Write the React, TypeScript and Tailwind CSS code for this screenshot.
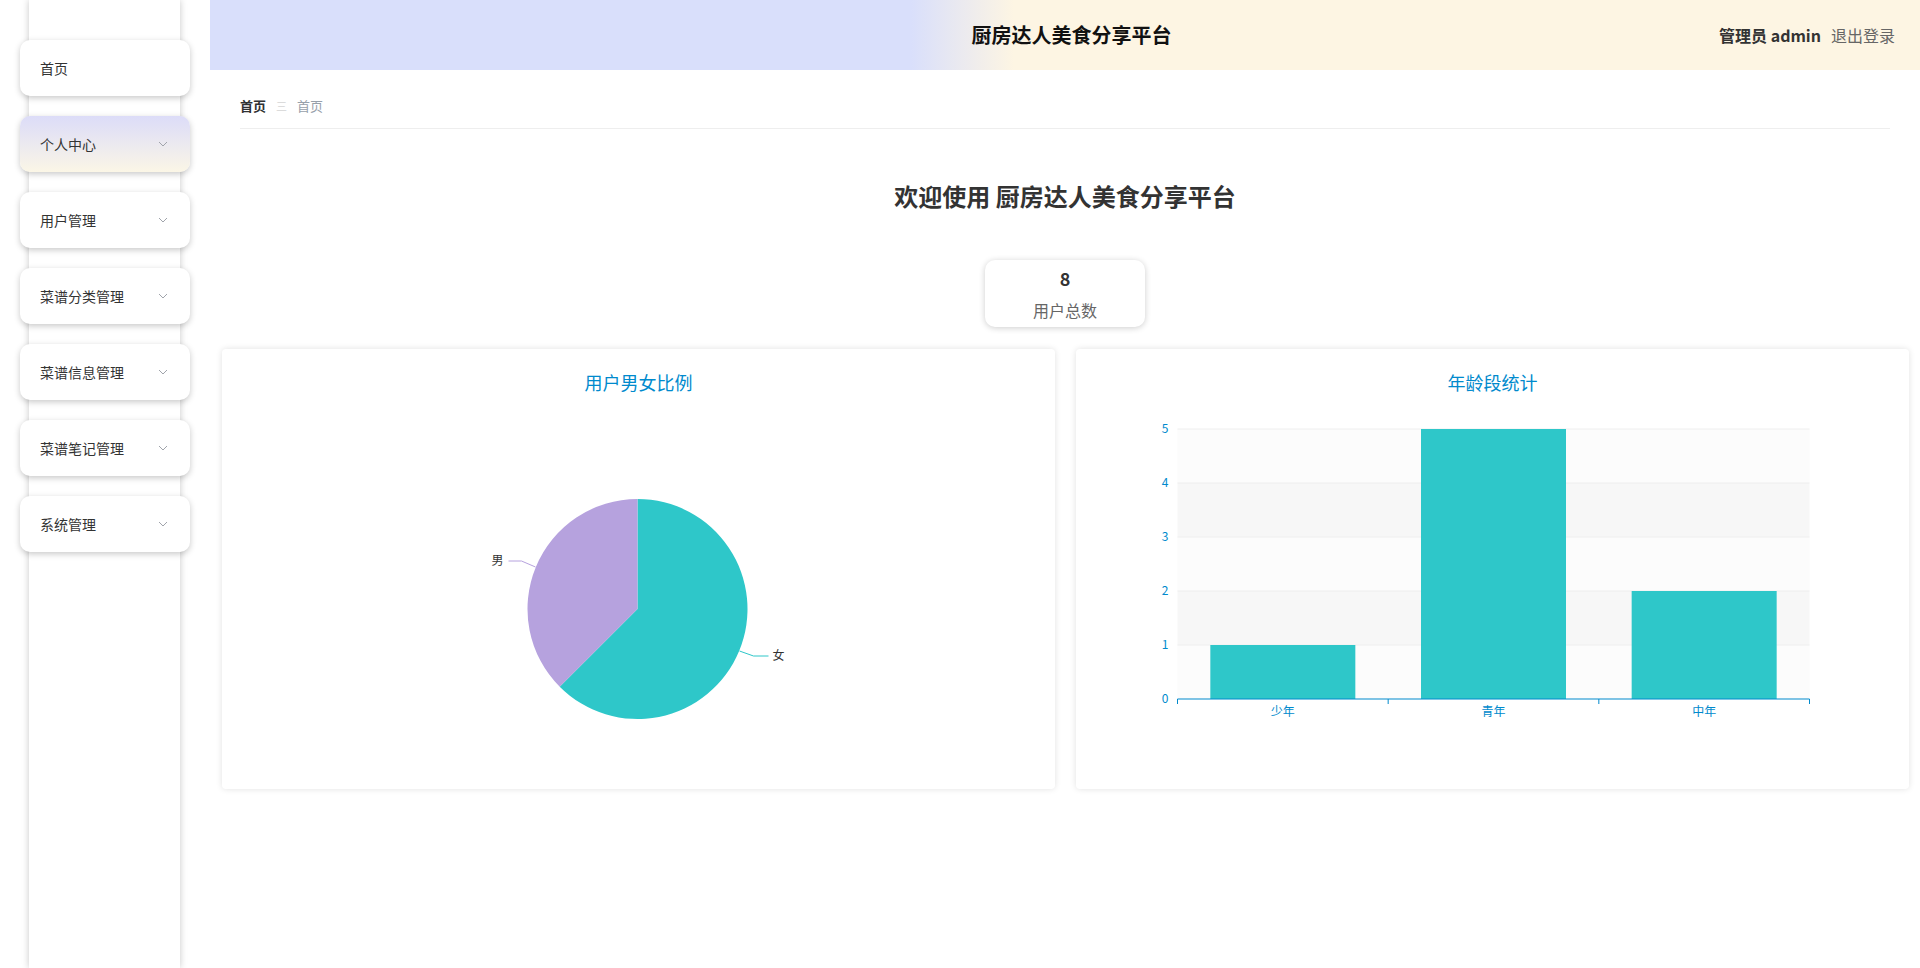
import React from "react";

const menus = [
  { name: "首页", sub: false },
  { name: "个人中心", sub: true, active: true },
  { name: "用户管理", sub: true },
  { name: "菜谱分类管理", sub: true },
  { name: "菜谱信息管理", sub: true },
  { name: "菜谱笔记管理", sub: true },
  { name: "系统管理", sub: true },
];

const font = "font-['Noto_Sans_CJK_SC','Noto_Sans',sans-serif]";

function Chevron() {
  return (
    <svg width="10" height="6" viewBox="0 0 10 6" className="mr-[22px]">
      <polyline
        points="1,1 5,5 9,1"
        fill="none"
        stroke="#a0a4ab"
        strokeWidth="1"
      />
    </svg>
  );
}

function Sidebar() {
  return (
    <aside className="h-full w-[210px] shrink-0 pl-[29px]">
      <div className="flex h-full w-[151px] flex-col gap-5 bg-white pt-10 shadow-[0_0_7px_rgba(0,0,0,0.22)]">
        {menus.map((m) => (
          <div
            key={m.name}
            className={
              "-ml-[9px] flex h-14 w-[170px] items-center justify-between rounded-[10px] pl-5 text-[14px] text-[#333] shadow-[0_2px_6px_rgba(0,0,0,0.22)] " +
              (m.active
                ? "bg-gradient-to-b from-[#dcdcf8] to-[#fbf6e6]"
                : "bg-white")
            }
          >
            <span>{m.name}</span>
            {m.sub && <Chevron />}
          </div>
        ))}
      </div>
    </aside>
  );
}

function Header() {
  return (
    <header className="grid h-[70px] shrink-0 grid-cols-[1fr_auto_1fr] items-center bg-[linear-gradient(90deg,#d9dffb_0%,#d9dffb_41%,#fdf5e3_47%,#fdf5e3_100%)] pr-[25px]">
      <div />
      <div className="pl-[38px] text-[20px] font-bold text-[#111]">
        厨房达人美食分享平台
      </div>
      <div className="flex items-center justify-end gap-[10px] text-[16px]">
        <span className="font-bold text-[#333]">管理员 admin</span>
        <span className="text-[#666]">退出登录</span>
      </div>
    </header>
  );
}

function PieChart() {
  const cx = 415;
  const cy = 215;
  const r = 110;
  const a = (225 * Math.PI) / 180;
  const ex = cx + r * Math.sin(a);
  const ey = cy - r * Math.cos(a);
  return (
    <svg width="100%" height="395" viewBox="0 0 832 395">
      <path
        d={`M${cx},${cy} L${cx},${cy - r} A${r},${r} 0 1 1 ${ex},${ey} Z`}
        fill="#2ec7c9"
      />
      <path
        d={`M${cx},${cy} L${ex},${ey} A${r},${r} 0 0 1 ${cx},${cy - r} Z`}
        fill="#b6a2de"
      />
      <polyline
        points="313,173 299,167 286,167"
        fill="none"
        stroke="#b6a2de"
        strokeWidth="1"
      />
      <text x="281" y="171" textAnchor="end" fontSize="12" fill="#333">
        男
      </text>
      <polyline
        points="517,257 531,262 546,262"
        fill="none"
        stroke="#2ec7c9"
        strokeWidth="1"
      />
      <text x="550" y="266" fontSize="12" fill="#333">
        女
      </text>
    </svg>
  );
}

const bars = [
  { name: "少年", value: 1 },
  { name: "青年", value: 5 },
  { name: "中年", value: 2 },
];

function BarChart() {
  const left = 101;
  const right = 733;
  const top = 35;
  const bottom = 305;
  const unit = (bottom - top) / 5;
  const cat = (right - left) / 3;
  const barW = 145;
  return (
    <svg width="100%" height="395" viewBox="0 0 832 395">
      {[0, 1, 2, 3, 4].map((i) => (
        <rect
          key={i}
          x={left}
          y={bottom - (i + 1) * unit}
          width={right - left}
          height={unit}
          fill={i % 2 === 0 ? "#fcfcfc" : "#f7f7f7"}
        />
      ))}
      {[1, 2, 3, 4, 5].map((v) => (
        <line
          key={v}
          x1={left}
          x2={right}
          y1={bottom - v * unit}
          y2={bottom - v * unit}
          stroke="#eee"
        />
      ))}
      {[0, 1, 2, 3, 4, 5].map((v) => (
        <text
          key={v}
          x={92}
          y={bottom - v * unit + 4}
          textAnchor="end"
          fontSize="12"
          fill="#008acd"
        >
          {v}
        </text>
      ))}
      {bars.map((b, i) => {
        const c = left + cat * i + cat / 2;
        return (
          <g key={b.name}>
            <rect
              x={c - barW / 2}
              y={bottom - b.value * unit}
              width={barW}
              height={b.value * unit}
              fill="#2ec7c9"
            />
            <text
              x={c}
              y={bottom + 17}
              textAnchor="middle"
              fontSize="12"
              fill="#008acd"
            >
              {b.name}
            </text>
          </g>
        );
      })}
      <line x1={left} x2={right} y1={bottom} y2={bottom} stroke="#008acd" />
      {[0, 1, 2, 3].map((i) => (
        <line
          key={i}
          x1={left + cat * i}
          x2={left + cat * i}
          y1={bottom}
          y2={bottom + 5}
          stroke="#008acd"
        />
      ))}
    </svg>
  );
}

function ChartCard({
  title,
  children,
}: {
  title: string;
  children: React.ReactNode;
}) {
  return (
    <div className="flex h-[440px] flex-col rounded-[4px] bg-white shadow-[0_0_6px_rgba(0,0,0,0.12)]">
      <div className="pt-[21px] text-center text-[18px] leading-6 text-[#008acd]">
        {title}
      </div>
      {children}
    </div>
  );
}

export default function App() {
  return (
    <div className={`flex h-[968px] w-full overflow-hidden bg-white ${font}`}>
      <Sidebar />
      <main className="flex min-w-0 flex-1 flex-col">
        <Header />
        <div className="px-[30px]">
          <div className="flex items-center gap-[10px] border-b border-[#eee] pt-[26px] pb-[12px] text-[13px] leading-5">
            <span className="font-bold text-[#303133]">首页</span>
            <span className="text-[11px] text-[#d5d5d5]">三</span>
            <span className="text-[#97a0aa]">首页</span>
          </div>
        </div>
        <h1 className="mt-[51px] text-center text-[24px] leading-8 font-bold text-[#333]">
          欢迎使用 厨房达人美食分享平台
        </h1>
        <div className="mt-[48px] flex justify-center">
          <div className="flex h-[67px] w-[160px] flex-col items-center justify-center gap-[12px] rounded-[10px] bg-white shadow-[0_1px_6px_rgba(0,0,0,0.2)]">
            <div className="text-[18px] leading-5 font-bold text-[#333]">8</div>
            <div className="text-[16px] leading-5 text-[#666]">用户总数</div>
          </div>
        </div>
        <div className="mt-[22px] grid grid-cols-2 gap-[21px] pr-[11px] pl-[12px]">
          <ChartCard title="用户男女比例">
            <PieChart />
          </ChartCard>
          <ChartCard title="年龄段统计">
            <BarChart />
          </ChartCard>
        </div>
      </main>
    </div>
  );
}
